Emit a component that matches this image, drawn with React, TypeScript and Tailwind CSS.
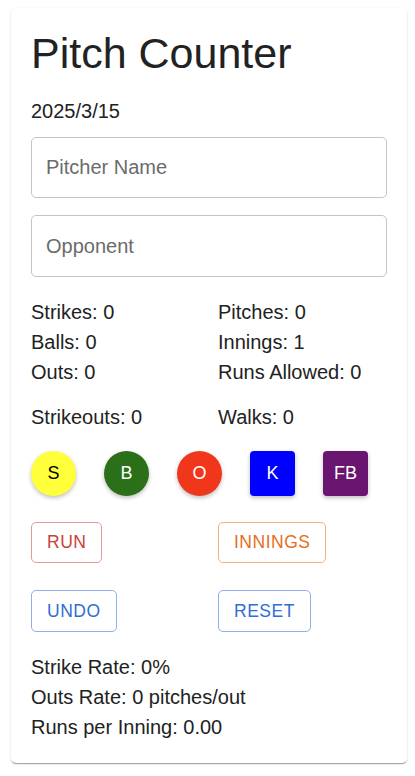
import { useState } from 'react';

const FONT = { fontFamily: '"Liberation Sans", Arial, Helvetica, sans-serif' };

export default function App() {
  const [pitcher, setPitcher] = useState('');
  const [opponent, setOpponent] = useState('');

  const left = ['Strikes: 0', 'Balls: 0', 'Outs: 0'];
  const right = ['Pitches: 0', 'Innings: 1', 'Runs Allowed: 0'];

  return (
    <div className="min-h-screen bg-white pt-2 pl-[11px] pr-2" style={FONT}>
      <div className="w-[396px] rounded-[5px] bg-white px-5 pt-5 pb-[21px] text-[#222] shadow-[0_2px_1px_-1px_rgba(0,0,0,0.2),0_1px_1px_0_rgba(0,0,0,0.14),0_1px_3px_0_rgba(0,0,0,0.12)]">
        <h1 className="text-[43px] leading-[50px] font-normal text-[#222]">Pitch Counter</h1>
        <p className="mt-[18px] text-[20px] leading-[30px]">2025/3/15</p>

        <div className="mt-[11px] flex flex-col gap-[17px]">
          <input
            value={pitcher}
            onChange={(e) => setPitcher(e.target.value)}
            placeholder="Pitcher Name"
            className="h-[61px] w-full rounded-[5px] border border-[#c4c4c4] px-[14px] text-[20px] text-[#222] outline-none placeholder:text-[#6b6b6b]"
          />
          <input
            value={opponent}
            onChange={(e) => setOpponent(e.target.value)}
            placeholder="Opponent"
            className="h-[62px] w-full rounded-[5px] border border-[#c4c4c4] px-[14px] text-[20px] text-[#222] outline-none placeholder:text-[#6b6b6b]"
          />
        </div>

        <div className="mt-5 grid grid-cols-[187px_1fr] text-[20px] leading-[30px]">
          <div>
            {left.map((t) => (
              <div key={t}>{t}</div>
            ))}
          </div>
          <div>
            {right.map((t) => (
              <div key={t}>{t}</div>
            ))}
          </div>
        </div>

        <div className="mt-[15px] grid grid-cols-[187px_1fr] text-[20px] leading-[30px]">
          <div>Strikeouts: 0</div>
          <div>Walks: 0</div>
        </div>

        <div className="mt-[19px] flex gap-[28px] text-[18px]">
          <button className="grid h-[45px] w-[45px] place-items-center rounded-full bg-[#ffff3b] text-black shadow-[0_2px_4px_rgba(0,0,0,0.25)]">S</button>
          <button className="grid h-[45px] w-[45px] place-items-center rounded-full bg-[#2b6f19] text-white shadow-[0_2px_4px_rgba(0,0,0,0.25)]">B</button>
          <button className="grid h-[45px] w-[45px] place-items-center rounded-full bg-[#f0361b] text-white shadow-[0_2px_4px_rgba(0,0,0,0.25)]">O</button>
          <button className="grid h-[45px] w-[45px] place-items-center rounded-[4px] bg-[#0000ff] text-white shadow-[0_2px_4px_rgba(0,0,0,0.25)]">K</button>
          <button className="grid h-[45px] w-[45px] place-items-center rounded-[4px] bg-[#6a1570] text-white shadow-[0_2px_4px_rgba(0,0,0,0.25)]">FB</button>
        </div>

        <div className="mt-[26px] grid grid-cols-[187px_1fr] gap-y-[27px] text-[17.5px] tracking-[0.5px]">
          <div>
            <button className="h-[41px] rounded-[5px] border border-[#e59a9a] px-[15px] text-[#c9423a]">RUN</button>
          </div>
          <div>
            <button className="h-[41px] rounded-[5px] border border-[#f3b183] px-[15px] text-[#e46f22]">INNINGS</button>
          </div>
          <div>
            <button className="h-[42px] rounded-[5px] border border-[#8cb2e8] px-[15px] text-[#2d6fd2]">UNDO</button>
          </div>
          <div>
            <button className="h-[42px] rounded-[5px] border border-[#8cb2e8] px-[15px] text-[#2d6fd2]">RESET</button>
          </div>
        </div>

        <div className="mt-[20px] text-[20px] leading-[30px]">
          <div>Strike Rate: 0%</div>
          <div>Outs Rate: 0 pitches/out</div>
          <div>Runs per Inning: 0.00</div>
        </div>
      </div>
    </div>
  );
}
